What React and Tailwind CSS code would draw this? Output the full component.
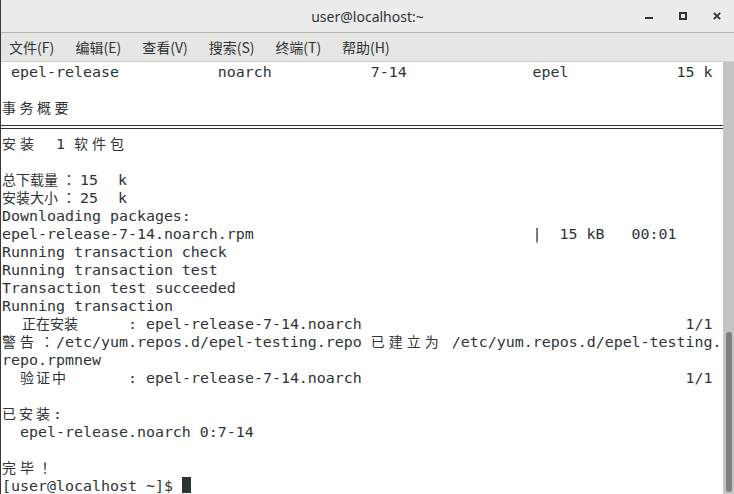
import React from "react";

const CJK = "font-['Noto_Sans_CJK_SC',sans-serif]";

function Cells({ text, cls }) {
  return [...text].map((ch, i) => (
    <span
      key={i}
      className={`inline-block leading-[16px] text-[14px] font-['Noto_Sans_CJK_SC',sans-serif] ${cls}`}
    >
      {ch}
    </span>
  ));
}

function Punct({ text, cls }) {
  return [...text].map((ch, i) => (
    <span
      key={i}
      className={`inline-block leading-[16px] text-[14px] text-center font-['Noto_Sans_CJK_TC',sans-serif] ${cls}`}
    >
      {ch}
    </span>
  ));
}

function Row({ children }) {
  return <div className="h-[18px] leading-[20px] whitespace-pre">{children}</div>;
}

function TitleBar() {
  return (
    <div className="h-[33px] shrink-0 grid grid-cols-[1fr_auto_1fr] items-center bg-[#ececec] border-b border-[#b7b7b4]">
      <div />
      <div className="font-['Noto_Sans',sans-serif] text-[14px] text-[#2e3436]">user@localhost:~</div>
      <div className="flex justify-end h-full">
        <div className="w-[34px] h-full flex items-center justify-center">
          <svg width="8" height="8" viewBox="0 0 8 8">
            <rect x="0" y="5" width="8" height="2" fill="#2e3436" />
          </svg>
        </div>
        <div className="w-[34px] h-full flex items-center justify-center">
          <svg width="8" height="8" viewBox="0 0 8 8">
            <rect x="1" y="1" width="6" height="6" fill="none" stroke="#2e3436" strokeWidth="2" />
          </svg>
        </div>
        <div className="w-[34px] h-full flex items-center justify-center">
          <svg width="8" height="8" viewBox="0 0 8 8">
            <path d="M0.8 0.8 L7.2 7.2 M7.2 0.8 L0.8 7.2" stroke="#2e3436" strokeWidth="1.8" />
          </svg>
        </div>
      </div>
    </div>
  );
}

function MenuBar() {
  const items = ["文件(F)", "编辑(E)", "查看(V)", "搜索(S)", "终端(T)", "帮助(H)"];
  return (
    <div className={`h-[29px] shrink-0 flex items-center pl-[8px] bg-[#e6e6e5] border-b border-[#cfcfcd] text-[14px] text-[#2e3436] ${CJK}`}>
      {items.map((t) => (
        <div key={t} className="w-[66.6px] shrink-0">
          {t}
        </div>
      ))}
    </div>
  );
}

function Terminal() {
  const row0 =
    " epel-release".padEnd(24) +
    "noarch".padEnd(17) +
    "7-14".padEnd(18) +
    "epel".padEnd(16) +
    "15 k";
  const row9 = "epel-release-7-14.noarch.rpm".padEnd(59) + "|  15 kB   00:01";
  const inst = ": epel-release-7-14.noarch".padEnd(62) + "1/1";
  return (
    <div className="flex-1 min-w-0 pl-[1px] text-[14.95px] text-[#2e3436] font-['DejaVu_Sans_Mono',monospace]">
      <Row>{row0}</Row>
      <Row> </Row>
      <Row>
        <Cells text="事务概要" cls="w-[17.5px]" />
      </Row>
      <div className="h-[18px] pt-[9px] -ml-[1px]">
        <div className="h-[4px] border-y border-[#2e3436]" />
      </div>
      <Row>
        <Cells text="安装" cls="w-[18px]" />
        {"  1 "}
        <Cells text="软件包" cls="w-[18px]" />
      </Row>
      <Row> </Row>
      <Row>
        <Cells text="总下载量" cls="w-[14px]" />
        <Punct text="：" cls="w-[22px]" />
        {"15"}
        <span className="inline-block w-[20px]" />
        {"k"}
      </Row>
      <Row>
        <Cells text="安装大小" cls="w-[14px]" />
        <Punct text="：" cls="w-[22px]" />
        {"25"}
        <span className="inline-block w-[20px]" />
        {"k"}
      </Row>
      <Row>Downloading packages:</Row>
      <Row>{row9}</Row>
      <Row>Running transaction check</Row>
      <Row>Running transaction test</Row>
      <Row>Transaction test succeeded</Row>
      <Row>Running transaction</Row>
      <Row>
        <span className="inline-block w-[126px] pl-[20px]">
          <Cells text="正在安装" cls="w-[14px]" />
        </span>
        {inst}
      </Row>
      <Row>
        <Cells text="警告" cls="w-[18px]" />
        <Punct text="：" cls="w-[18px]" />
        {"/etc/yum.repos.d/epel-testing.repo "}
        <Cells text="已建立为" cls="w-[18px]" />
        {" /etc/yum.repos.d/epel-testing."}
      </Row>
      <Row>repo.rpmnew</Row>
      <Row>
        <span className="inline-block w-[126px] pl-[18px]">
          <Cells text="验证中" cls="w-[16px]" />
        </span>
        {inst}
      </Row>
      <Row> </Row>
      <Row>
        <Cells text="已安装" cls="w-[17px]" />
        {":"}
      </Row>
      <Row>{"  epel-release.noarch 0:7-14"}</Row>
      <Row> </Row>
      <Row>
        <Cells text="完毕" cls="w-[18px]" />
        <Punct text="！" cls="w-[13px]" />
      </Row>
      <Row>
        {"[user@localhost ~]$ "}
        <span className="inline-block align-top mt-[1px] w-[9px] h-[16px] bg-[#2e3436]" />
      </Row>
    </div>
  );
}

export default function App() {
  return (
    <div className="w-[734px] h-[494px] flex flex-col bg-white border-l border-[#3a3a3a] overflow-hidden">
      <TitleBar />
      <MenuBar />
      <div className="flex flex-1 min-h-0">
        <Terminal />
        <div className="w-[11px] shrink-0 bg-[#c4c5c3] flex flex-col justify-end items-end pr-[2px] pb-[2px]">
          <div className="w-[6px] h-[160px] rounded-full bg-[#7d7f7c]" />
        </div>
      </div>
    </div>
  );
}
